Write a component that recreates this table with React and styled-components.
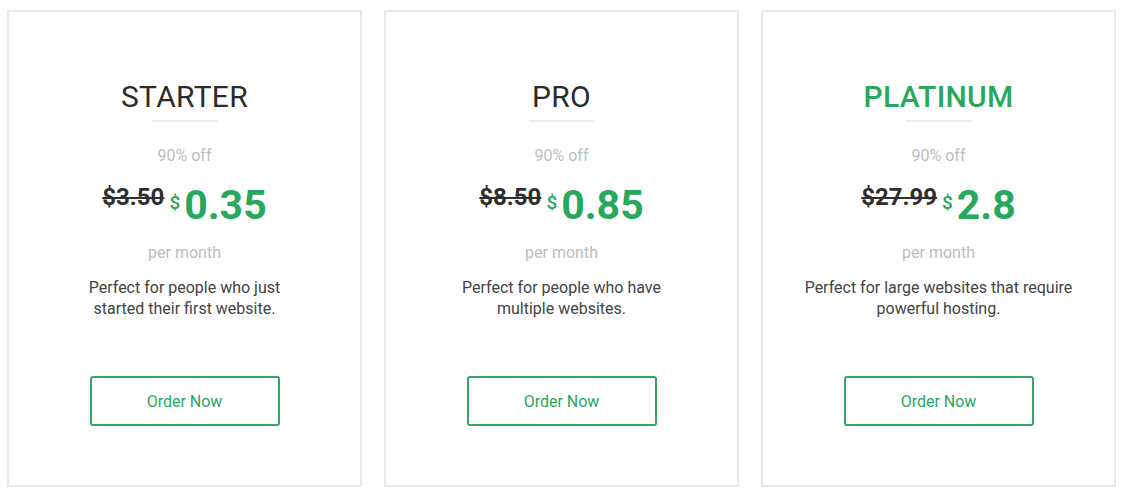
import styled, { createGlobalStyle } from 'styled-components';

const GlobalStyle = createGlobalStyle`
    body {
        margin: 0;
        background: #ffffff;
        font-family: Roboto, "Liberation Sans", sans-serif;
    }
`;

const Page = styled.div`
    display: grid;
    grid-template-columns: repeat(3, 355px);
    gap: 22px;
    padding: 10px 0 0 7px;
`;

const Card = styled.div`
    height: 477px;
    box-sizing: border-box;
    border: 2px solid #e8e8e8;
    display: flex;
    flex-direction: column;
    align-items: center;
    text-align: center;
    padding-top: 66px;
`;

const Title = styled.h2`
    margin: 0;
    font-size: 30px;
    font-weight: ${(p) => (p.highlight ? 500 : 400)};
    line-height: 38px;
    letter-spacing: 0.3px;
    color: ${(p) => (p.highlight ? '#27a85c' : '#2b2b2b')};
`;

const Divider = styled.div`
    width: 66px;
    height: 2px;
    background: #ececec;
    margin-top: 4px;
`;

const Discount = styled.div`
    margin-top: 24px;
    font-size: 16px;
    color: #bdbdbd;
    line-height: 20px;
`;

const PriceRow = styled.div`
    display: flex;
    align-items: flex-start;
    margin-top: 16px;
    height: 46px;
`;

const OldPrice = styled.span`
    font-size: 24px;
    font-weight: 700;
    line-height: 30px;
    color: #2e2e2e;
    text-decoration: line-through;
    text-decoration-thickness: 2px;
`;

const Currency = styled.span`
    font-size: 19px;
    font-weight: 500;
    line-height: 24px;
    color: #27a85c;
    margin: 9px 4px 0 5px;
`;

const Amount = styled.span`
    font-size: 41px;
    font-weight: 700;
    color: #27a85c;
    line-height: 46px;
`;

const Period = styled.div`
    margin-top: 15px;
    font-size: 16px;
    color: #bdbdbd;
    line-height: 20px;
`;

const Description = styled.p`
    margin: 14px 0 0;
    font-size: 16px;
    line-height: 21px;
    color: #444444;
`;

const OrderButton = styled.button`
    margin-top: 57px;
    width: 190px;
    height: 50px;
    box-sizing: border-box;
    border: 2px solid #33a866;
    border-radius: 3px;
    background: #ffffff;
    color: #27a85c;
    font-family: Roboto, "Liberation Sans", sans-serif;
    font-size: 16px;
    cursor: pointer;
`;

const plans = [
    { name: 'STARTER', old: '$3.50', price: '0.35', lines: ['Perfect for people who just', 'started their first website.'] },
    { name: 'PRO', old: '$8.50', price: '0.85', lines: ['Perfect for people who have', 'multiple websites.'] },
    { name: 'PLATINUM', old: '$27.99', price: '2.8', lines: ['Perfect for large websites that require', 'powerful hosting.'], highlight: true },
];

function App() {
    return (
        <>
            <GlobalStyle />
            <Page>
                {plans.map((plan) => (
                    <Card key={plan.name}>
                        <Title highlight={plan.highlight}>{plan.name}</Title>
                        <Divider />
                        <Discount>90% off</Discount>
                        <PriceRow>
                            <OldPrice>{plan.old}</OldPrice>
                            <Currency>$</Currency>
                            <Amount>{plan.price}</Amount>
                        </PriceRow>
                        <Period>per month</Period>
                        <Description>
                            {plan.lines[0]}
                            <br />
                            {plan.lines[1]}
                        </Description>
                        <OrderButton>Order Now</OrderButton>
                    </Card>
                ))}
            </Page>
        </>
    );
}

export default App;
